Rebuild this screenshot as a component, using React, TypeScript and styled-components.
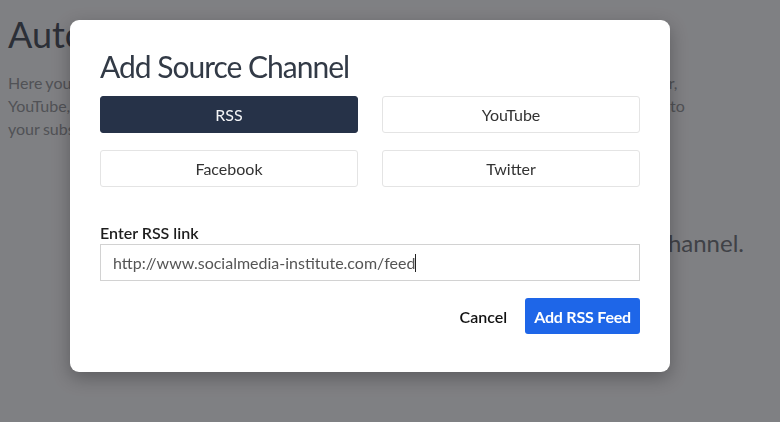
import React, { useMemo, useState } from 'react';
import styled, { createGlobalStyle } from 'styled-components';

const FONT = 'Lato, "Open Sans", "Liberation Sans", sans-serif';

const GlobalStyle = createGlobalStyle`
  html, body {
    margin: 0;
    padding: 0;
    background: #ffffff;
    font-family: ${FONT};
  }
  * { box-sizing: border-box; }
`;

const Page = styled.div`
  padding: 12px 8px;
  height: 422px;
  overflow: hidden;
`;

const PageTitle = styled.h1`
  margin: 0 0 15px;
  font-size: 36px;
  font-weight: 400;
  color: #575c66;
  line-height: 44px;
`;

const Intro = styled.p`
  margin: 0;
  font-size: 16px;
  line-height: 23px;
  word-spacing: -0.7px;
  color: #a2a3a5;
  white-space: nowrap;
`;

const EmptyNote = styled.p`
  margin: 88px 0 0;
  text-align: right;
  padding-right: 28px;
  font-size: 24px;
  color: #808286;
`;

const Overlay = styled.div`
  position: fixed;
  inset: 0;
  background: rgba(0, 2, 7, 0.5);
  display: flex;
  align-items: flex-start;
  padding: 20px 0 0 70px;
`;

const Modal = styled.div`
  width: 600px;
  background: #fff;
  border-radius: 9px;
  box-shadow: 0 6px 18px rgba(0, 0, 0, 0.28);
  padding: 28px 30px 38px;
`;

const Title = styled.h2`
  margin: 0 0 12px;
  font-size: 30px;
  font-weight: 400;
  line-height: 36px;
  letter-spacing: -1px;
  color: #323a46;
`;

const ChannelGrid = styled.div`
  display: grid;
  grid-template-columns: 1fr 1fr;
  column-gap: 24px;
  row-gap: 17px;
`;

const ChannelButton = styled.button<{ $active: boolean }>`
  height: 37px;
  border-radius: 3px;
  font-family: inherit;
  font-size: 16px;
  cursor: pointer;
  border: 1px solid ${p => (p.$active ? '#263248' : '#e4e4e4')};
  background: ${p => (p.$active ? '#263248' : '#fff')};
  color: ${p => (p.$active ? '#f4f5f7' : '#333')};
`;

const Field = styled.div`
  margin-top: 36px;
  display: flex;
  flex-direction: column;
  gap: 2px;
`;

const Label = styled.label`
  font-size: 16px;
  line-height: 19px;
  font-weight: 600;
  color: #1d1d1d;
`;

const InputWrap = styled.div`
  position: relative;
`;

const Input = styled.input`
  display: block;
  width: 100%;
  height: 37px;
  border: 1px solid #d2d2d2;
  border-radius: 0;
  padding: 0 12px;
  font-family: inherit;
  font-size: 16px;
  color: #555;
  outline: none;
  caret-color: transparent;
`;

// text cursor drawn after the current value
const Caret = styled.span`
  position: absolute;
  top: 10px;
  width: 1px;
  height: 18px;
  background: #222;
  pointer-events: none;
`;

const Footer = styled.div`
  margin-top: 17px;
  display: flex;
  justify-content: flex-end;
  align-items: center;
  gap: 18px;
`;

const TextButton = styled.button`
  border: none;
  background: none;
  padding: 0;
  font-family: inherit;
  font-size: 16px;
  font-weight: 600;
  color: #111;
  cursor: pointer;
`;

const PrimaryButton = styled.button`
  height: 36px;
  padding: 0 9px;
  border: none;
  border-radius: 3px;
  background: #1e66e8;
  color: #fff;
  font-family: inherit;
  font-size: 16px;
  font-weight: 700;
  letter-spacing: -0.2px;
  cursor: pointer;
`;

const channels = ['RSS', 'YouTube', 'Facebook', 'Twitter'];

function textWidth(text: string) {
  const ctx = document.createElement('canvas').getContext('2d');
  if (!ctx) return text.length * 7;
  ctx.font = `16px ${FONT}`;
  return ctx.measureText(text).width;
}

export default function App() {
  const [active, setActive] = useState('RSS');
  const [link, setLink] = useState('http://www.socialmedia-institute.com/feed');
  const caretLeft = useMemo(() => 13 + Math.round(textWidth(link)), [link]);

  return (
    <>
      <GlobalStyle />
      <Page>
        <PageTitle>Automated Content</PageTitle>
        <Intro>
          Here you can add all the source channels you want to pull new content from, such as RSS, Twitter,
          <br />
          YouTube, Facebook and Instagram. New posts from every connected channel will then be added to
          <br />
          your subscription queue automatically.
        </Intro>
        <EmptyNote>You have not added any source channel.</EmptyNote>
      </Page>
      <Overlay>
        <Modal>
          <Title>Add Source Channel</Title>
          <ChannelGrid>
            {channels.map(name => (
              <ChannelButton key={name} $active={active === name} onClick={() => setActive(name)}>
                {name}
              </ChannelButton>
            ))}
          </ChannelGrid>
          <Field>
            <Label>Enter RSS link</Label>
            <InputWrap>
              <Input value={link} onChange={e => setLink(e.target.value)} />
              <Caret style={{ left: caretLeft }} />
            </InputWrap>
          </Field>
          <Footer>
            <TextButton>Cancel</TextButton>
            <PrimaryButton>Add RSS Feed</PrimaryButton>
          </Footer>
        </Modal>
      </Overlay>
    </>
  );
}
